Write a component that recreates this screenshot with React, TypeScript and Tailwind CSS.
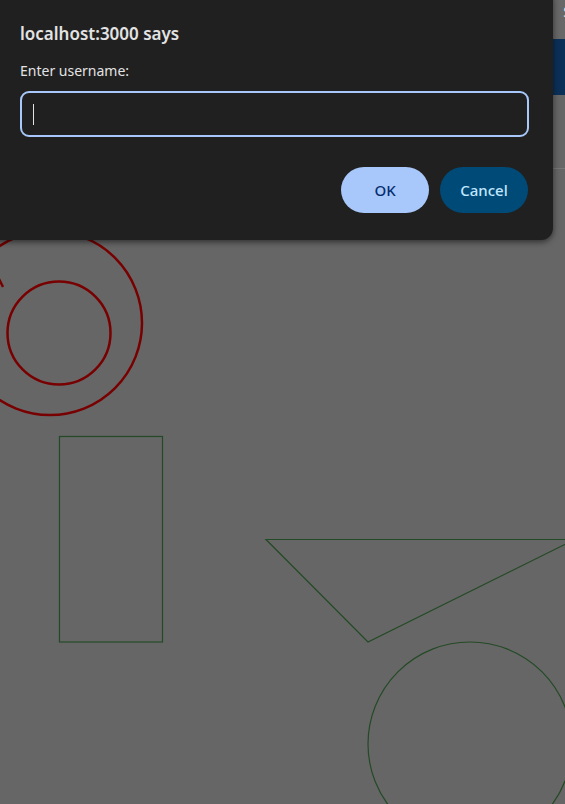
const Canvas = () => {
  // shapes drawn on the page canvas (already dimmed by the dialog overlay)
  return (
    <svg width="565" height="635" viewBox="0 169 565 635" className="block">
      <circle cx="50" cy="323" r="92" fill="none" stroke="#780000" strokeWidth="2.5" />
      <circle cx="59" cy="333" r="51.5" fill="none" stroke="#780000" strokeWidth="2.5" />
      <line x1="-1" y1="279" x2="3" y2="287" stroke="#780000" strokeWidth="2.5" />
      <rect x="59.5" y="436.5" width="103" height="205.5" fill="none" stroke="#244a25" strokeWidth="1.2" />
      <polygon points="266,539.5 575,539.5 368,642" fill="none" stroke="#244a25" strokeWidth="1.2" />
      <circle cx="470" cy="744" r="102" fill="none" stroke="#244a25" strokeWidth="1.2" />
    </svg>
  );
};

const PromptDialog = () => {
  return (
    <div className="absolute left-[-12px] top-[-12px] w-[565px] rounded-[12px] bg-[#202020] pl-[32px] pr-[24px] pt-[34px] pb-[27px] shadow-[0_2px_6px_rgba(0,0,0,0.55)]">
      <div className="text-[17px] font-semibold leading-[24px] text-[#e3e3e3]">localhost:3000 says</div>
      <div className="mt-[15px] text-[14px] leading-[20px] text-[#e3e3e3]">Enter username:</div>
      <div className="mt-[10px] flex h-[46px] items-center rounded-[9px] border-2 border-[#a8c7fa] px-[11px]">
        <span className="h-[21px] w-px bg-[#e3e3e3]" />
      </div>
      <div className="mt-[30px] flex justify-end gap-[11px] pr-px">
        <button className="h-[46px] w-[88px] rounded-full bg-[#a8c7fa] text-[15px] font-medium text-[#062e6f]">OK</button>
        <button className="h-[46px] w-[88px] rounded-full bg-[#004a77] text-[15px] font-medium text-[#c2e7ff]">Cancel</button>
      </div>
    </div>
  );
};

export default function App() {
  return (
    <div
      className="relative h-[804px] w-[565px] overflow-hidden bg-[#666666]"
      style={{ fontFamily: '"Noto Sans", "Open Sans", sans-serif' }}
    >
      {/* page behind the prompt */}
      <div className="flex h-[39px] items-start justify-end bg-[#686868] pt-[2px]">
        <span className="text-[14px] leading-[20px] text-[#e6e6e6] mr-[-6px]">S</span>
      </div>
      <div className="h-[56px] bg-[#0b3057]" />
      <div className="h-[74px] border-b border-[#777777] bg-[#666666]" />
      <Canvas />

      <PromptDialog />
    </div>
  );
}
